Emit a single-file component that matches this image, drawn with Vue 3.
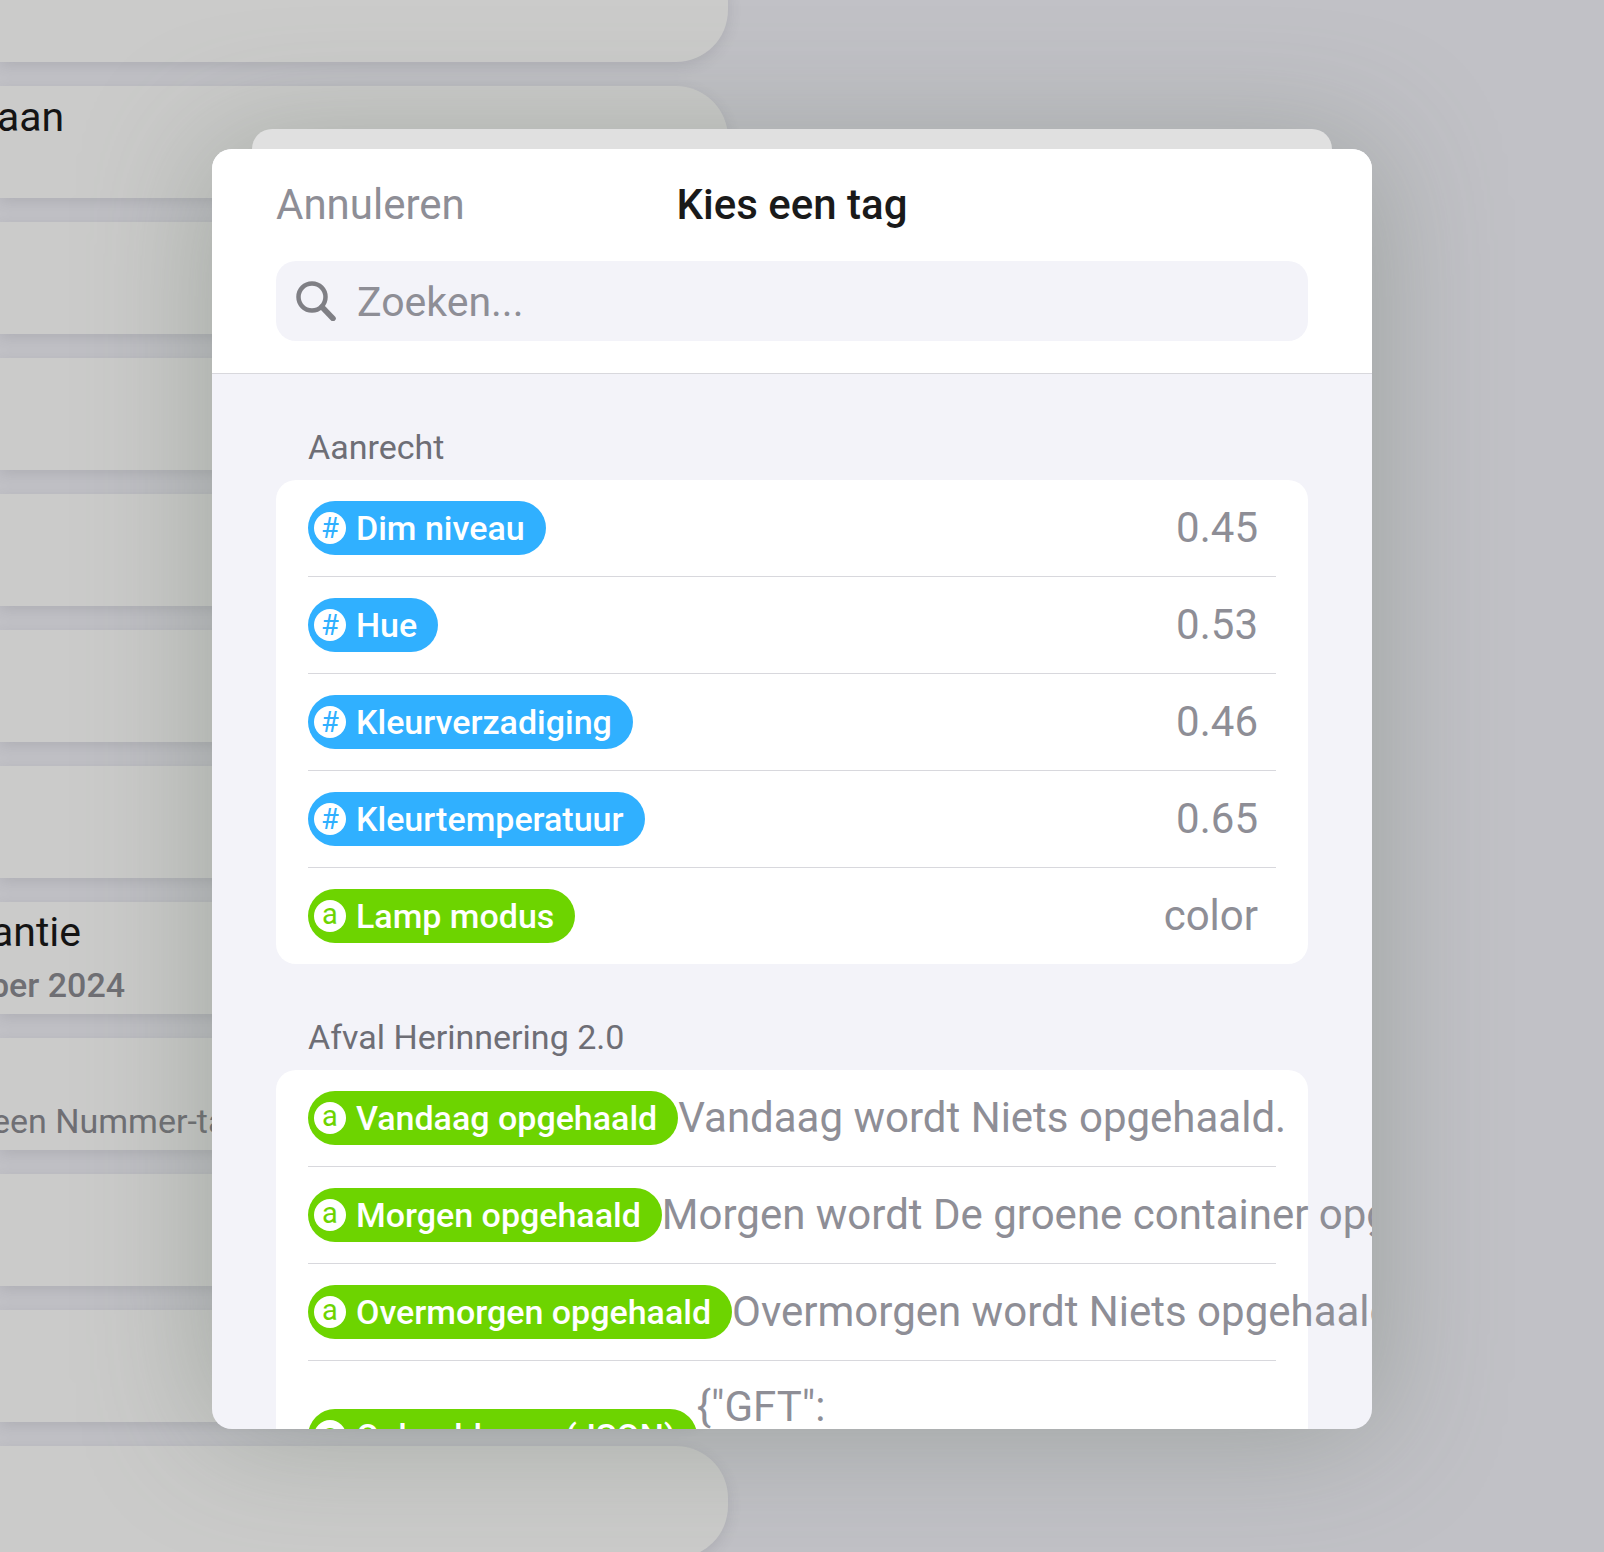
<template>
  <div class="screen">
    <div class="backdrop">
      <div v-for="(row, i) in listRows" :key="i" class="list-row">
        <div v-if="row.title" class="list-title" :class="row.titleClass">{{ row.title }}</div>
        <div v-if="row.sub" class="list-sub" :class="row.subClass">{{ row.sub }}</div>
      </div>
    </div>

    <div class="sheet-behind"></div>

    <div class="modal">
      <div class="modal-head">
        <div class="head-row">
          <span class="cancel">Annuleren</span>
          <span class="title">Kies een tag</span>
          <span></span>
        </div>
        <div class="search">
          <svg class="search-icon" viewBox="0 0 40 40" fill="none" stroke="#7f7f85" stroke-width="4.5" stroke-linecap="round">
            <circle cx="16" cy="16" r="13.5" />
            <path d="M26 26 L37 37.5" stroke-width="5.5" />
          </svg>
          <input class="search-input" type="text" placeholder="Zoeken..." />
        </div>
      </div>

      <div class="modal-body">
        <section v-for="group in groups" :key="group.name">
          <h3 class="group-name">{{ group.name }}</h3>
          <div class="card">
            <div v-for="tag in group.tags" :key="tag.name" class="tag-row">
              <span class="pill" :class="tag.type">
                <span class="pill-icon">{{ tag.type === 'number' ? '#' : 'a' }}</span>
                <span class="pill-text">{{ tag.name }}</span>
              </span>
              <span class="value" :class="{ multi: tag.multi }">{{ tag.value }}</span>
            </div>
          </div>
        </section>
      </div>
    </div>
  </div>
</template>

<script setup>
const listRows = [
  {},
  { title: 'aan' },
  {},
  {},
  {},
  {},
  {},
  { title: 'antie', titleClass: 'shift', sub: 'ber 2024', subClass: 'strong' },
  { sub: 'een Nummer-tag', subClass: 'lone' },
  {},
  {},
  {}
];

const groups = [
  {
    name: 'Aanrecht',
    tags: [
      { name: 'Dim niveau', type: 'number', value: '0.45' },
      { name: 'Hue', type: 'number', value: '0.53' },
      { name: 'Kleurverzadiging', type: 'number', value: '0.46' },
      { name: 'Kleurtemperatuur', type: 'number', value: '0.65' },
      { name: 'Lamp modus', type: 'text', value: 'color' }
    ]
  },
  {
    name: 'Afval Herinnering 2.0',
    tags: [
      { name: 'Vandaag opgehaald', type: 'text', value: 'Vandaag wordt Niets opgehaald.' },
      { name: 'Morgen opgehaald', type: 'text', value: 'Morgen wordt De groene container opgehaald.' },
      { name: 'Overmorgen opgehaald', type: 'text', value: 'Overmorgen wordt Niets opgehaald.' },
      { name: 'Ophaaldagen (JSON)', type: 'text', value: '{"GFT":', multi: true }
    ]
  }
];
</script>

<style>
html,
body {
  margin: 0;
  background: #c0c0c5;
}
</style>

<style scoped>
.screen {
  position: relative;
  width: 1604px;
  height: 1552px;
  overflow: hidden;
  font-family: Roboto, "Liberation Sans", sans-serif;
  background: #c1c1c6;
}

/* soft shade round the modal, sits under the sheets but over the list */
.screen::after {
  content: "";
  position: absolute;
  left: 212px;
  top: 149px;
  width: 1160px;
  height: 1280px;
  border-radius: 20px;
  box-shadow: 0 0 130px rgba(95, 110, 95, 0.4);
}

.backdrop {
  display: flex;
  flex-direction: column;
  gap: 24px;
  width: 728px;
  margin-top: -50px;
}

.list-row {
  height: 112px;
  flex-shrink: 0;
  box-sizing: border-box;
  padding-top: 7px;
  border-radius: 0 52px 52px 0;
  background: #cbcbca;
  box-shadow: 0 4px 14px rgba(80, 80, 95, 0.16);
  overflow: hidden;
}

.list-title {
  font-size: 41px;
  line-height: 48px;
  color: #141414;
  margin-left: -3px;
}

.list-title.shift {
  margin-top: -1px;
  margin-left: -9px;
}

.list-sub {
  font-size: 34px;
  line-height: 40px;
  color: #6f6f74;
  margin-left: -1px;
  white-space: nowrap;
}

.list-title + .list-sub {
  margin-top: 9px;
}

.list-sub.strong {
  font-weight: 500;
  margin-left: -10px;
}

.list-sub.lone {
  margin-top: 56px;
  margin-left: -8px;
}

.sheet-behind {
  position: absolute;
  z-index: 1;
  left: 252px;
  top: 129px;
  width: 1080px;
  height: 60px;
  border-radius: 20px 20px 0 0;
  background: #e0e0e0;
}

.modal {
  position: absolute;
  z-index: 2;
  left: 212px;
  top: 149px;
  width: 1160px;
  height: 1280px;
  border-radius: 20px;
  overflow: hidden;
  background: #f3f3f9;
}

.modal-head {
  background: #fff;
  padding: 0 64px 32px;
  border-bottom: 1px solid #d8d8dd;
}

.head-row {
  display: grid;
  grid-template-columns: 1fr auto 1fr;
  align-items: center;
  height: 110px;
  margin-bottom: 2px;
}

.cancel {
  font-size: 42px;
  color: #8e8e96;
}

.title {
  font-size: 42px;
  font-weight: 500;
  color: #1a1a1a;
}

.search {
  display: flex;
  align-items: center;
  height: 80px;
  padding-left: 20px;
  border-radius: 20px;
  background: #f3f3f9;
}

.search-icon {
  width: 40px;
  height: 40px;
  flex-shrink: 0;
}

.search-input {
  flex: 1;
  min-width: 0;
  margin-left: 21px;
  padding: 2px 0 0;
  border: none;
  outline: none;
  background: transparent;
  font-family: inherit;
  font-size: 41px;
  color: #141414;
}

.search-input::placeholder {
  color: #8e8e96;
  opacity: 1;
}

.modal-body {
  padding: 0 64px;
}

.group-name {
  margin: 0;
  padding: 53px 0 13px 32px;
  font-size: 34px;
  line-height: 40px;
  font-weight: 400;
  color: #6e6e76;
}

.card {
  border-radius: 20px;
  background: #fff;
}

.tag-row {
  display: flex;
  align-items: center;
  justify-content: space-between;
  min-height: 96px;
  margin: 0 32px;
  padding-right: 18px;
  border-bottom: 1px solid #d8d8dd;
}

.tag-row:last-child {
  border-bottom: none;
}

.pill {
  display: flex;
  align-items: center;
  flex-shrink: 0;
  height: 54px;
  padding: 0 21px 0 6px;
  border-radius: 27px;
  color: #fff;
}

.pill.number {
  background: #30b0ff;
}

.pill.text {
  background: #6dd400;
}

.pill-icon {
  display: flex;
  align-items: center;
  justify-content: center;
  width: 32px;
  height: 32px;
  border-radius: 50%;
  background: #fff;
  font-size: 29px;
  line-height: 1;
}

.pill.number .pill-icon {
  color: #30b0ff;
}

.pill.text .pill-icon {
  color: #6dd400;
  padding-bottom: 3px;
  box-sizing: border-box;
}

.pill-text {
  margin-left: 10px;
  font-size: 34px;
  font-weight: 500;
  white-space: nowrap;
}

.value {
  flex-shrink: 0;
  font-size: 42px;
  line-height: 48px;
  color: #8e8e96;
  white-space: nowrap;
}

.value.multi {
  align-self: flex-start;
  margin-top: 22px;
  margin-right: auto;
  height: 128px;
}
</style>
